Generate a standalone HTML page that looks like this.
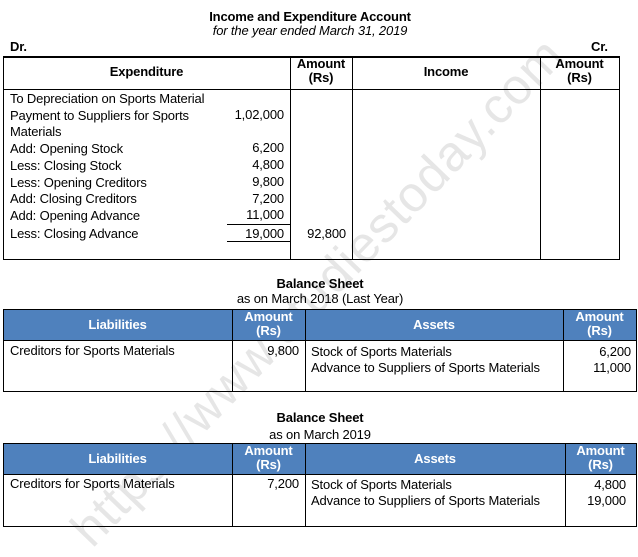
<!DOCTYPE html>
<html><head><meta charset="utf-8"><style>
body{margin:0;width:638px;height:529px;background:#fff;position:relative;overflow:hidden;font-family:"Liberation Sans",Arial,sans-serif;font-size:13px;color:#000;letter-spacing:-0.15px}
.a{position:absolute;white-space:nowrap;line-height:14px}
.b{font-weight:bold}
.r{text-align:right}
.c{text-align:center}
.h{position:absolute;background:#000;height:1px}
.v{position:absolute;background:#000;width:1px}
.blue{position:absolute;background:#4f81bd}
.w{color:#fff;font-weight:bold}
.wm{position:absolute;left:62px;top:520px;font-size:50px;color:#e6e6e6;transform:rotate(-46deg);transform-origin:0 0;letter-spacing:1px;white-space:nowrap;line-height:50px}
</style></head><body>
<div class="wm">https://www.studiestoday.com</div>

<div class="a b c" style="left:0;width:620px;top:10px">Income and Expenditure Account</div>
<div class="a c" style="left:0;width:620px;top:24px;font-style:italic">for the year ended March 31, 2019</div>
<div class="a b" style="left:10px;top:40px">Dr.</div>
<div class="a b" style="left:591px;top:40px">Cr.</div>
<div class="h" style="left:3px;width:617px;top:56px;height:2px"></div>
<div class="h" style="left:3px;width:617px;top:89px"></div>
<div class="h" style="left:3px;width:617px;top:259px"></div>
<div class="v" style="left:3px;top:56px;height:204px"></div>
<div class="v" style="left:290px;top:56px;height:204px"></div>
<div class="v" style="left:352px;top:56px;height:204px"></div>
<div class="v" style="left:540px;top:56px;height:204px"></div>
<div class="v" style="left:619px;top:56px;height:204px"></div>
<div class="a b c" style="left:3px;width:287px;top:65px">Expenditure</div>
<div class="a b c" style="left:290px;width:62px;top:57px">Amount<br>(Rs)</div>
<div class="a b c" style="left:352px;width:188px;top:65px">Income</div>
<div class="a b c" style="left:540px;width:79px;top:57px">Amount<br>(Rs)</div>
<div class="a" style="left:10px;top:91px;line-height:16.7px">To Depreciation on Sports Material<br>Payment to Suppliers for Sports<br>Materials<br>Add: Opening Stock<br>Less: Closing Stock<br>Less: Opening Creditors<br>Add: Closing Creditors<br>Add: Opening Advance</div>
<div class="a" style="left:10px;top:227px">Less: Closing Advance</div>
<div class="a r" style="left:200px;width:84px;top:107px;line-height:16.7px">1,02,000<br><br>6,200<br>4,800<br>9,800<br>7,200<br>11,000</div>
<div class="a r" style="left:200px;width:84px;top:227px">19,000</div>
<div class="a r" style="left:290px;width:56px;top:227px">92,800</div>
<div class="h" style="left:227px;width:63px;top:224px"></div>
<div class="h" style="left:227px;width:63px;top:241px"></div>

<div class="a b c" style="left:0;width:640px;top:277px">Balance Sheet</div>
<div class="a c" style="left:0;width:640px;top:292px">as on March 2018 (Last Year)</div>
<div class="blue" style="left:3px;top:310px;width:634px;height:30px"></div>
<div class="h" style="left:3px;width:634px;top:309px"></div>
<div class="h" style="left:3px;width:634px;top:340px"></div>
<div class="h" style="left:3px;width:634px;top:391px"></div>
<div class="v" style="left:3px;top:309px;height:83px"></div>
<div class="v" style="left:232px;top:309px;height:83px"></div>
<div class="v" style="left:305px;top:309px;height:83px"></div>
<div class="v" style="left:563px;top:309px;height:83px"></div>
<div class="v" style="left:636px;top:309px;height:83px"></div>
<div class="a w c" style="left:3px;width:229px;top:318px">Liabilities</div>
<div class="a w c" style="left:232px;width:73px;top:310px">Amount<br>(Rs)</div>
<div class="a w c" style="left:305px;width:258px;top:318px">Assets</div>
<div class="a w c" style="left:563px;width:73px;top:310px">Amount<br>(Rs)</div>
<div class="a" style="left:10px;top:344px">Creditors for Sports Materials</div>
<div class="a r" style="left:232px;width:67px;top:344px">9,800</div>
<div class="a" style="left:311px;top:344px;line-height:16px">Stock of Sports Materials<br>Advance to Suppliers of Sports Materials</div>
<div class="a r" style="left:563px;width:68px;top:344px;line-height:16px">6,200<br>11,000</div>

<div class="a b c" style="left:0;width:640px;top:411px">Balance Sheet</div>
<div class="a c" style="left:0;width:640px;top:428px">as on March 2019</div>
<div class="blue" style="left:3px;top:444px;width:634px;height:30px"></div>
<div class="h" style="left:3px;width:634px;top:443px"></div>
<div class="h" style="left:3px;width:634px;top:474px"></div>
<div class="h" style="left:3px;width:634px;top:526px"></div>
<div class="v" style="left:3px;top:443px;height:84px"></div>
<div class="v" style="left:232px;top:443px;height:84px"></div>
<div class="v" style="left:305px;top:443px;height:84px"></div>
<div class="v" style="left:565px;top:443px;height:84px"></div>
<div class="v" style="left:636px;top:443px;height:84px"></div>
<div class="a w c" style="left:3px;width:229px;top:452px">Liabilities</div>
<div class="a w c" style="left:232px;width:73px;top:444px">Amount<br>(Rs)</div>
<div class="a w c" style="left:305px;width:260px;top:452px">Assets</div>
<div class="a w c" style="left:565px;width:71px;top:444px">Amount<br>(Rs)</div>
<div class="a" style="left:10px;top:477px">Creditors for Sports Materials</div>
<div class="a r" style="left:232px;width:67px;top:477px">7,200</div>
<div class="a" style="left:311px;top:477px;line-height:16px">Stock of Sports Materials<br>Advance to Suppliers of Sports Materials</div>
<div class="a r" style="left:565px;width:61px;top:477px;line-height:16px">4,800<br>19,000</div>
</body></html>
